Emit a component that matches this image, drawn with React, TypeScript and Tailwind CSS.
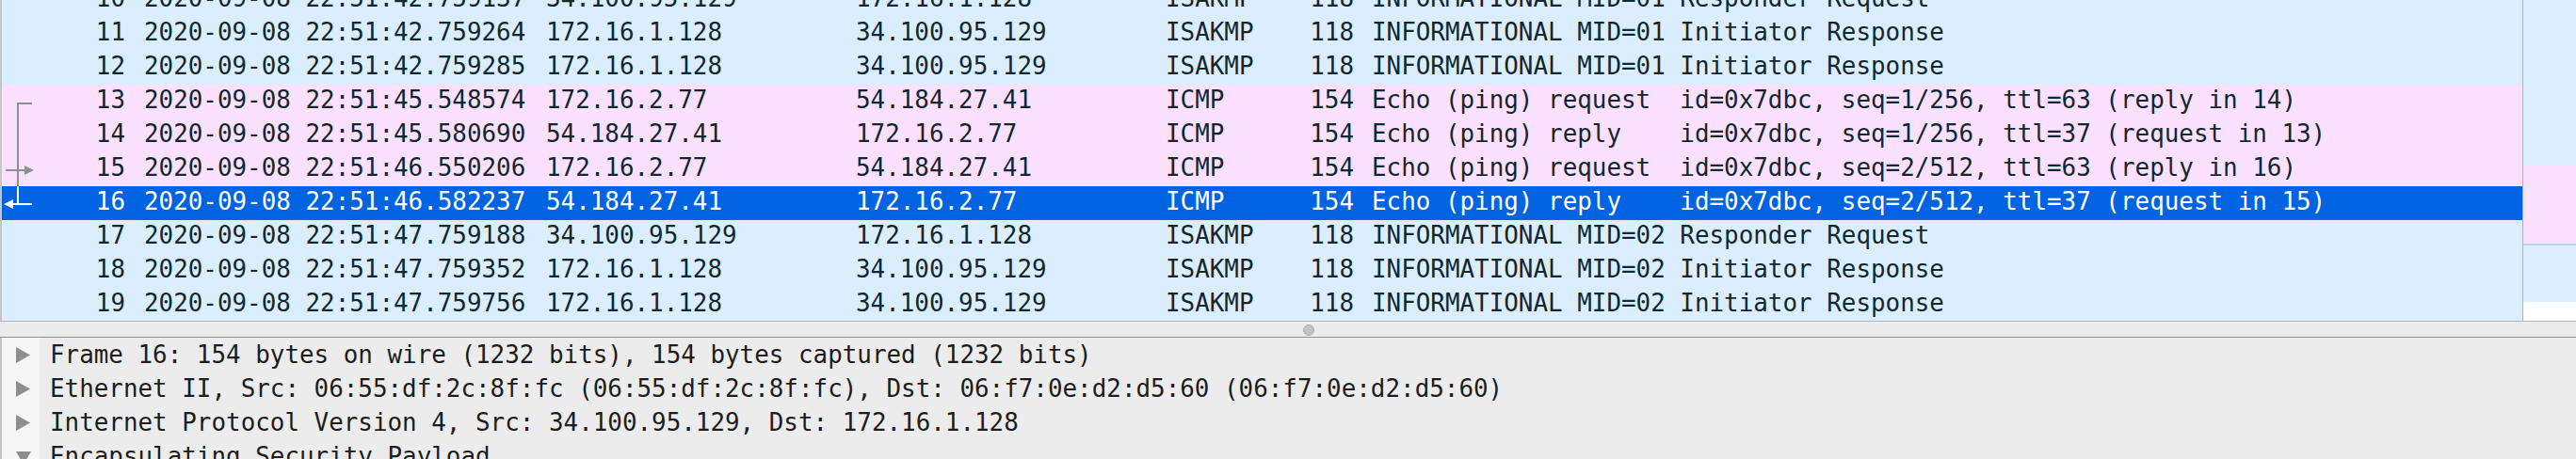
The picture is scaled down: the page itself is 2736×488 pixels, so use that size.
import React from 'react'

type Packet = {
  no: number
  time: string
  src: string
  dst: string
  proto: string
  len: number
  info: string
}

const packets: Packet[] = [
  { no: 10, time: '2020-09-08 22:51:42.759137', src: '34.100.95.129', dst: '172.16.1.128', proto: 'ISAKMP', len: 118, info: 'INFORMATIONAL MID=01 Responder Request' },
  { no: 11, time: '2020-09-08 22:51:42.759264', src: '172.16.1.128', dst: '34.100.95.129', proto: 'ISAKMP', len: 118, info: 'INFORMATIONAL MID=01 Initiator Response' },
  { no: 12, time: '2020-09-08 22:51:42.759285', src: '172.16.1.128', dst: '34.100.95.129', proto: 'ISAKMP', len: 118, info: 'INFORMATIONAL MID=01 Initiator Response' },
  { no: 13, time: '2020-09-08 22:51:45.548574', src: '172.16.2.77', dst: '54.184.27.41', proto: 'ICMP', len: 154, info: 'Echo (ping) request  id=0x7dbc, seq=1/256, ttl=63 (reply in 14)' },
  { no: 14, time: '2020-09-08 22:51:45.580690', src: '54.184.27.41', dst: '172.16.2.77', proto: 'ICMP', len: 154, info: 'Echo (ping) reply    id=0x7dbc, seq=1/256, ttl=37 (request in 13)' },
  { no: 15, time: '2020-09-08 22:51:46.550206', src: '172.16.2.77', dst: '54.184.27.41', proto: 'ICMP', len: 154, info: 'Echo (ping) request  id=0x7dbc, seq=2/512, ttl=63 (reply in 16)' },
  { no: 16, time: '2020-09-08 22:51:46.582237', src: '54.184.27.41', dst: '172.16.2.77', proto: 'ICMP', len: 154, info: 'Echo (ping) reply    id=0x7dbc, seq=2/512, ttl=37 (request in 15)' },
  { no: 17, time: '2020-09-08 22:51:47.759188', src: '34.100.95.129', dst: '172.16.1.128', proto: 'ISAKMP', len: 118, info: 'INFORMATIONAL MID=02 Responder Request' },
  { no: 18, time: '2020-09-08 22:51:47.759352', src: '172.16.1.128', dst: '34.100.95.129', proto: 'ISAKMP', len: 118, info: 'INFORMATIONAL MID=02 Initiator Response' },
  { no: 19, time: '2020-09-08 22:51:47.759756', src: '172.16.1.128', dst: '34.100.95.129', proto: 'ISAKMP', len: 118, info: 'INFORMATIONAL MID=02 Initiator Response' },
]

const SELECTED = 16

// related-packet markers in the left gutter
const Related = ({ no }: { no: number }) => {
  const c = '#8d8f90'
  if (no === 13)
    return (
      <svg width="38" height="36">
        <rect x="16" y="19" width="2" height="17" fill={c} />
        <rect x="16" y="19" width="16" height="2" fill={c} />
      </svg>
    )
  if (no === 14)
    return (
      <svg width="38" height="36">
        <rect x="16" y="0" width="2" height="36" fill={c} />
      </svg>
    )
  if (no === 15)
    return (
      <svg width="38" height="36">
        <rect x="16" y="0" width="2" height="36" fill={c} />
        <rect x="4" y="18" width="22" height="2" fill={c} />
        <polygon points="24,14 34,19 24,24" fill={c} />
      </svg>
    )
  if (no === 16)
    return (
      <svg width="38" height="36">
        <rect x="16" y="0" width="2" height="20" fill="#fff" />
        <rect x="10" y="18" width="22" height="2" fill="#fff" />
        <polygon points="12,14 2,19 12,24" fill="#fff" />
      </svg>
    )
  return <div className="w-[38px]" />
}

const Row = ({ p }: { p: Packet }) => {
  const selected = p.no === SELECTED
  const bg = selected ? 'bg-[#0063e1] text-white' : p.proto === 'ICMP' ? 'bg-[#fce0ff] text-[#12272e]' : 'bg-[#daeeff] text-[#12272e]'
  return (
    <div className={`flex h-[36px] leading-[32px] whitespace-pre ${bg}`}>
      <div className="w-[38px] shrink-0">
        <Related no={p.no} />
      </div>
      <div className="w-[93px] shrink-0 text-right">{p.no}</div>
      <div className="w-[447px] shrink-0 pl-[20px]">{p.time}</div>
      <div className="w-[329px] shrink-0">{p.src}</div>
      <div className="w-[329px] shrink-0">{p.dst}</div>
      <div className="w-[122px] shrink-0">{p.proto}</div>
      <div className="w-[78px] shrink-0 text-right">{p.len}</div>
      <div className="flex-1 pl-[19px]">{p.info}</div>
    </div>
  )
}

const details = [
  { open: false, text: 'Frame 16: 154 bytes on wire (1232 bits), 154 bytes captured (1232 bits)' },
  { open: false, text: 'Ethernet II, Src: 06:55:df:2c:8f:fc (06:55:df:2c:8f:fc), Dst: 06:f7:0e:d2:d5:60 (06:f7:0e:d2:d5:60)' },
  { open: false, text: 'Internet Protocol Version 4, Src: 34.100.95.129, Dst: 172.16.1.128' },
  { open: true, text: 'Encapsulating Security Payload' },
]

const App: React.FC = () => {
  return (
    <div className="w-[2736px] h-[488px] overflow-hidden flex flex-col bg-[#ececec] font-['DejaVu_Sans_Mono',monospace] text-[25.9px]">
      {/* packet list */}
      <div className="h-[341px] shrink-0 flex border-l-2 border-[#c6c6c6]">
        <div className="w-[2678px] overflow-hidden border-r border-[#b1b1b1] bg-[#daeeff]">
          <div className="-mt-[18px]">
            {packets.map((p) => (
              <Row key={p.no} p={p} />
            ))}
          </div>
        </div>
        {/* intelligent scrollbar minimap */}
        <div className="flex-1 flex flex-col">
          <div className="h-[176px] bg-[#daeeff]" />
          <div className="h-[83px] bg-[#fce0ff]" />
          <div className="h-[2px] bg-[#b3d5fd]" />
          <div className="h-[60px] bg-[#daeeff]" />
          <div className="flex-1 bg-white" />
        </div>
      </div>

      {/* splitter */}
      <div className="h-[18px] shrink-0 flex justify-center pt-[3px] border-t border-b border-t-[#b5b5b5] border-b-[#8f8f8f] bg-[#ececec]">
        <div className="w-[12px] h-[12px] rounded-full bg-[#c3c3c3] border border-[#adadad] ml-[44px]" />
      </div>

      {/* packet details */}
      <div className="flex-1 overflow-hidden border-l-2 border-[#c6c6c6] text-[#1d1d1d]">
        {details.map((d) => (
          <div key={d.text} className="flex h-[36px] leading-[36px] whitespace-pre">
            <div className="w-[40px] shrink-0 bg-[#f6f6f6] flex items-center">
              {d.open ? (
                <svg width="16" height="14" className="ml-[15px] mt-[4px]">
                  <polygon points="0,0 16,0 8,14" fill="#8e8e8e" />
                </svg>
              ) : (
                <svg width="15" height="17" className="ml-[15px]">
                  <polygon points="0,0 15,8.5 0,17" fill="#8e8e8e" />
                </svg>
              )}
            </div>
            <div className="pl-[11px]">{d.text}</div>
          </div>
        ))}
      </div>
    </div>
  )
}

export default App
